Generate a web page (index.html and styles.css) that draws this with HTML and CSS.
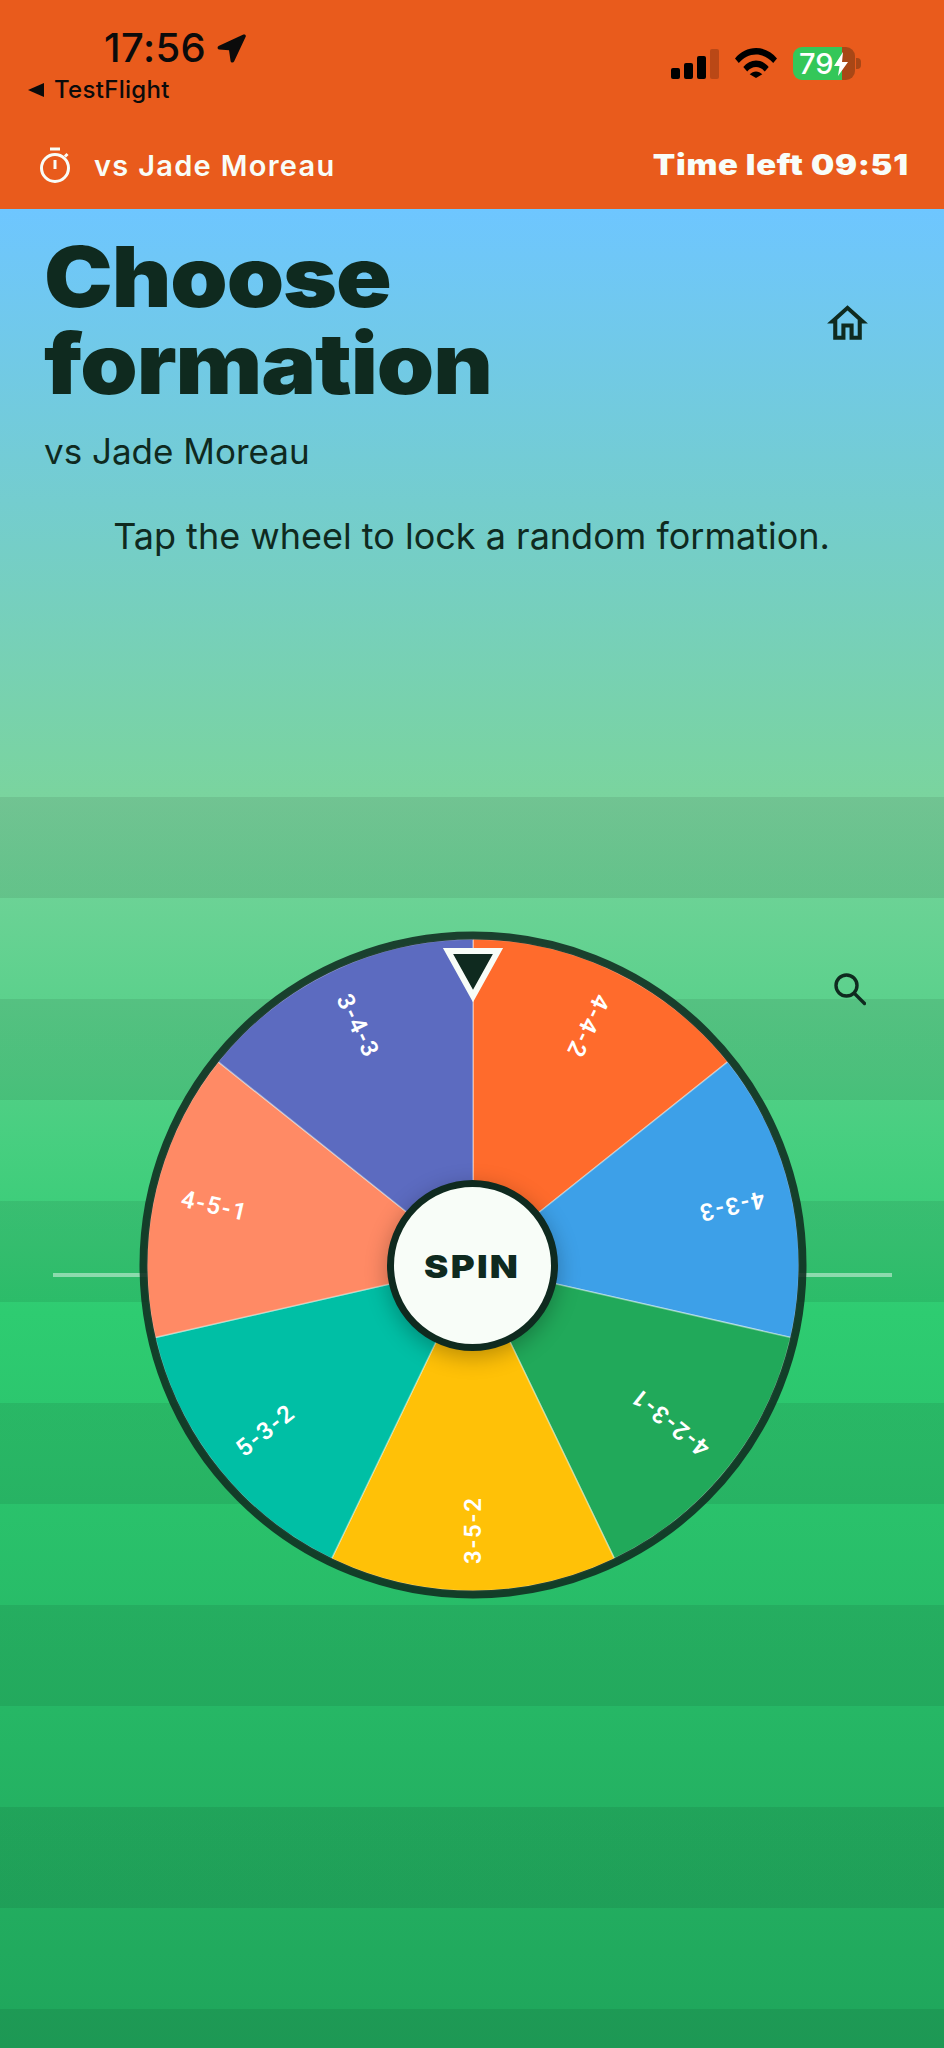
FILE: index.html
```html
<!DOCTYPE html>
<html lang="en">
<head>
    <meta charset="UTF-8">
    <meta name="viewport" content="width=device-width, initial-scale=1.0">
    <title>Choose formation</title>
    <link rel="stylesheet" href="styles.css">
</head>
<body>
    <div class="screen">

        <!-- Orange top bar -->
        <header class="topbar">
            <div class="status">
                <div class="status-left">
                    <div class="clock">
                        <span>17:56</span>
                        <svg class="arrow" viewBox="0 0 30 30" width="31" height="31"><path d="M2.500 13.500 26.500 2.500c1.600-.7 2.900.7 2.200 2.200L17.500 28.500c-.8 1.600-3.100 1.300-3.400-.5l-1.500-10.400L3 16.900c-1.700-.3-2-2.500-.5-3.400z" fill="#0b0b0b"/></svg>
                    </div>
                    <div class="back"><span class="back-arrow"></span>TestFlight</div>
                </div>
                <div class="status-right">
                    <div class="signal">
                        <span class="bar bar-1"></span>
                        <span class="bar bar-2"></span>
                        <span class="bar bar-3"></span>
                        <span class="bar bar-4"></span>
                    </div>
                    <svg class="wifi" viewBox="0 0 42 30" width="42" height="30"><path d="M0 10.500C5.500 3.800 13 0 21 0s15.500 3.800 21 10.500l-3.800 4.500C33.700 9.800 27.600 6.500 21 6.500S8.300 9.800 3.800 15z" fill="#000"/><path d="M8.300 19C11.700 14.800 16.200 12.500 21 12.500s9.300 2.300 12.700 6.500l-3.900 4.500C27.400 20.600 24.300 19 21 19s-6.400 1.600-8.800 4.500z" fill="#000"/><path d="M14.700 26.300c1.800-1.900 4-2.900 6.300-2.900s4.500 1 6.300 2.900L21 30z" fill="#000"/></svg>
                    <div class="battery">
                        <div class="battery-body">
                            <span class="battery-level">79</span>
                            <svg class="bolt" viewBox="0 0 14 24" width="14" height="24"><path d="M9 0 0 14h5.500L4 24l10-14H8z" fill="#fff"/></svg>
                        </div>
                        <span class="battery-nub"></span>
                    </div>
                </div>
            </div>
            <div class="match">
                <div class="opponent">
                    <svg class="timer" viewBox="0 0 30 36" width="30" height="36" fill="none" stroke="#f8fdf8" stroke-width="3"><path d="M10 2h10M15 13v9M25 9.500l2.500-2.500"/><circle cx="15" cy="21" r="13.500"/></svg>
                    <span>vs Jade Moreau</span>
                </div>
                <div class="time-left">Time left 09:51</div>
            </div>
        </header>

        <main class="content">
            <section class="intro">
                <div class="title-row">
                    <div>
                        <h1>Choose<br>formation</h1>
                        <p class="subtitle">vs Jade Moreau</p>
                    </div>
                    <svg class="home" viewBox="0 0 24 24" width="49" height="49"><path d="M12 5.690l5 4.500V18h-2v-6H9v6H7v-7.810l5-4.500M12 3 2 12h3v8h6v-6h2v6h6v-8h3L12 3z" fill="#0f2a1f"/></svg>
                </div>
                <p class="hint">Tap the wheel to lock a random formation.</p>
            </section>

            <!-- Striped pitch with the wheel -->
            <section class="pitch">
                <svg class="search" viewBox="0 0 32 33" width="32" height="33" fill="none" stroke="#0f2a1f" stroke-width="3.400" stroke-linecap="round"><circle cx="12.500" cy="12.500" r="10.500"/><path d="M20.500 20.500 30.500 30.500"/></svg>
                <div class="wheel">
                    <svg class="wheel-svg" viewBox="-334 -334 668 668" width="668" height="668">
                        <g stroke="rgba(255,255,255,0.4)" stroke-width="1.500">
                            <path d="M0 0 0 -326A326 326 0 0 1 254.900 -203.300Z" fill="#ff6b2c"/>
                            <path d="M0 0 254.900 -203.300A326 326 0 0 1 317.800 72.500Z" fill="#3da0e8"/>
                            <path d="M0 0 317.800 72.500A326 326 0 0 1 141.400 293.700Z" fill="#21a95a"/>
                            <path d="M0 0 141.400 293.700A326 326 0 0 1 -141.400 293.700Z" fill="#ffc107"/>
                            <path d="M0 0 -141.400 293.700A326 326 0 0 1 -317.800 72.500Z" fill="#00bfa5"/>
                            <path d="M0 0 -317.800 72.500A326 326 0 0 1 -254.900 -203.300Z" fill="#ff8a65"/>
                            <path d="M0 0 -254.900 -203.300A326 326 0 0 1 0 -326Z" fill="#5c6bc0"/>
                        </g>
                        <circle class="wheel-ring" r="329.500"/>
                        <g class="labels">
                            <text transform="rotate(25.71) translate(0 -299) rotate(90)">4-4-2</text>
                            <text transform="rotate(77.14) translate(0 -299) rotate(90)">4-3-3</text>
                            <text transform="rotate(128.57) translate(0 -299) rotate(90)">4-2-3-1</text>
                            <text transform="rotate(180) translate(0 -299) rotate(90)">3-5-2</text>
                            <text transform="rotate(231.43) translate(0 -299) rotate(90)">5-3-2</text>
                            <text transform="rotate(282.86) translate(0 -299) rotate(90)">4-5-1</text>
                            <text transform="rotate(334.29) translate(0 -299) rotate(90)">3-4-3</text>
                        </g>
                        <polygon class="pointer" points="-25,-314 25,-314 0,-269"/>
                    </svg>
                    <div class="hub"><span class="hub-label">SPIN</span></div>
                </div>
            </section>
        </main>
    </div>
</body>
</html>
```
FILE: styles.css
```css
* {
    box-sizing: border-box;
}

body {
    margin: 0;
    font-family: Inter, 'Noto Sans', sans-serif;
    color: #0f2a1f;
}

.screen {
    width: 944px;
    height: 2048px;
    display: flex;
    flex-direction: column;
    overflow: hidden;
}

/* Top bar */
.topbar {
    height: 209px;
    background-color: #e95b1c;
    flex-shrink: 0;
}

.status {
    display: flex;
    justify-content: space-between;
    height: 147px;
    padding: 24px 83px 0 28px;
}

.clock {
    display: flex;
    align-items: center;
    gap: 10px;
    padding-left: 76px;
    font-size: 40px;
    font-weight: 500;
    letter-spacing: 0.4px;
    line-height: 47px;
    color: #0b0b0b;
}

.back {
    display: flex;
    align-items: center;
    gap: 10px;
    margin-top: 5px;
    font-size: 24px;
    font-weight: 500;
    letter-spacing: 0.3px;
    line-height: 28px;
    color: #0b0b0b;
}

.back-arrow {
    width: 0;
    height: 0;
    border-top: 7px solid transparent;
    border-bottom: 7px solid transparent;
    border-right: 16px solid #0b0b0b;
}

.status-right {
    display: flex;
    align-items: flex-start;
    gap: 16px;
    padding-top: 23px;
}

.signal {
    display: flex;
    align-items: flex-end;
    gap: 4px;
    height: 31px;
    margin-top: 1px;
}

.bar {
    width: 9px;
    border-radius: 2px;
    background-color: #000;
}

.bar-1 { height: 11px; }
.bar-2 { height: 16px; }
.bar-3 { height: 23px; }
.bar-4 { height: 30px; background-color: rgba(0, 0, 0, 0.2); }

.wifi {
    margin-top: 1px;
}

.battery {
    display: flex;
    align-items: center;
    gap: 1px;
}

.battery-body {
    width: 62px;
    height: 33px;
    display: flex;
    align-items: center;
    padding-left: 6px;
    border-radius: 9px;
    background: linear-gradient(to right, #34c759 49px, #a84716 49px);
    color: #fff;
    font-size: 29px;
    font-weight: 500;
}

.battery-level {
    line-height: 33px;
}

.battery-nub {
    width: 5px;
    height: 11px;
    border-radius: 0 4px 4px 0;
    background-color: #a84716;
}

.match {
    display: flex;
    justify-content: space-between;
    align-items: center;
    padding: 0 35px 0 40px;
    color: #f8fdf8;
}

.opponent {
    display: flex;
    align-items: center;
    gap: 24px;
    font-size: 29px;
    font-weight: 600;
    letter-spacing: 1.3px;
}

.time-left {
    font-size: 28px;
    font-weight: 900;
    letter-spacing: 0.6px;
    transform: scaleX(1.17);
    transform-origin: right center;
}

/* Sky to grass background */
.content {
    flex: 1;
    display: flex;
    flex-direction: column;
    background: linear-gradient(to bottom, #6ec6ff 0%, #7ad49e 32%, #2ecc71 60%, #1fa55b 100%);
}

.intro {
    height: 588px;
    flex-shrink: 0;
    padding: 24px 45px 0 44px;
}

.title-row {
    display: flex;
    justify-content: space-between;
    align-items: flex-start;
}

h1 {
    margin: 0;
    font-size: 84px;
    font-weight: 900;
    line-height: 87px;
    letter-spacing: -1px;
    transform: scaleX(1.095);
    transform-origin: left center;
}

.subtitle {
    margin: 22px 0 0;
    font-size: 35px;
    line-height: 44px;
}

.home {
    margin-top: 66px;
    margin-right: 27px;
}

.hint {
    margin: 41px 0 0;
    text-align: center;
    font-size: 36px;
    line-height: 44px;
}

.pitch {
    flex: 1;
    position: relative;
    padding-top: 134px;
    background: repeating-linear-gradient(to bottom, rgba(0, 0, 0, 0.08) 0, rgba(0, 0, 0, 0.08) 101px, transparent 101px, transparent 202px);
}

/* Halfway line behind the wheel */
.pitch::before {
    content: '';
    position: absolute;
    left: 53px;
    right: 52px;
    top: 476px;
    height: 4px;
    background-color: rgba(255, 255, 255, 0.45);
}

.search {
    position: absolute;
    left: 834px;
    top: 176px;
}

.wheel {
    position: relative;
    width: 668px;
    height: 668px;
    margin-left: 138.500px;
}

.wheel-svg {
    display: block;
}

.wheel-ring {
    fill: none;
    stroke: #0f2a1f;
    stroke-opacity: 0.87;
    stroke-width: 8;
}

.labels text {
    fill: #fff;
    font-family: Roboto, sans-serif;
    font-size: 24px;
    font-weight: 600;
    letter-spacing: 1.800px;
    text-anchor: start;
    dominant-baseline: central;
}

.pointer {
    fill: #0f2a1f;
    stroke: #f8fdf8;
    stroke-width: 6;
}

.hub {
    position: absolute;
    left: 248.500px;
    top: 248.500px;
    width: 171px;
    height: 171px;
    display: flex;
    align-items: center;
    justify-content: center;
    padding-top: 2px;
    border: 7px solid #0f2a1f;
    border-radius: 50%;
    background-color: #f8fdf8;
    box-shadow: 0 6px 22px rgba(0, 0, 0, 0.28);
    font-size: 32px;
    font-weight: 900;
    letter-spacing: 2px;
}

.hub-label {
    transform: scaleX(1.14);
}
```
